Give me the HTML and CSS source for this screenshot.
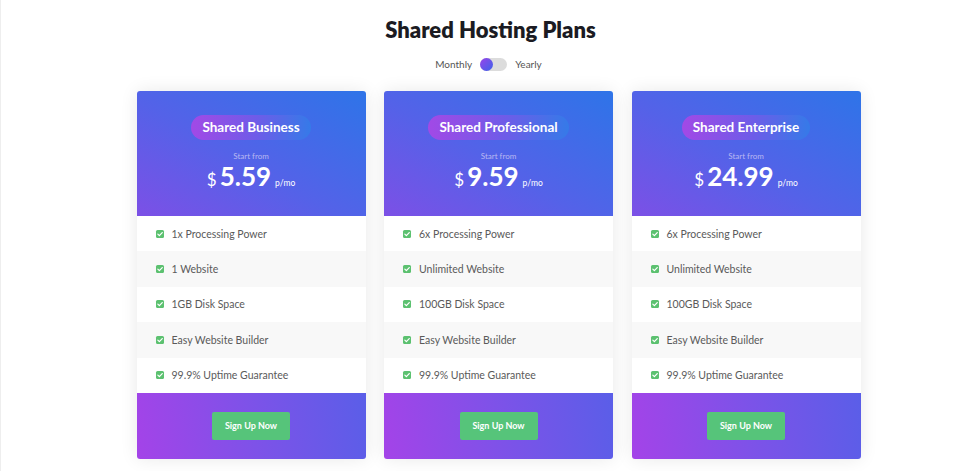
FILE: index.html
```html
<!DOCTYPE html>
<html>
<head>
<meta charset="utf-8">
<link rel="stylesheet" href="styles.css">
</head>
<body>
<div class="page">
  <h1 class="title">Shared Hosting Plans</h1>
  <div class="switch-row">
    <span class="switch-label">Monthly</span>
    <span class="switch"><span class="knob"></span></span>
    <span class="switch-label">Yearly</span>
  </div>
  <div class="cards">
    <div class="card">
      <div class="card-head">
        <span class="pill">Shared Business</span>
        <div class="start">Start from</div>
        <div class="price"><span class="cur">$</span><span class="amt">5.59</span><span class="per">p/mo</span></div>
      </div>
      <ul class="features">
        <li><span class="chk"><svg viewBox="0 0 10 10"><path d="M2.3 5.2 L4.2 7 L7.8 3.2" fill="none" stroke="#fff" stroke-width="1.5" stroke-linecap="round" stroke-linejoin="round"/></svg></span>1x Processing Power</li>
        <li class="alt"><span class="chk"><svg viewBox="0 0 10 10"><path d="M2.3 5.2 L4.2 7 L7.8 3.2" fill="none" stroke="#fff" stroke-width="1.5" stroke-linecap="round" stroke-linejoin="round"/></svg></span>1 Website</li>
        <li><span class="chk"><svg viewBox="0 0 10 10"><path d="M2.3 5.2 L4.2 7 L7.8 3.2" fill="none" stroke="#fff" stroke-width="1.5" stroke-linecap="round" stroke-linejoin="round"/></svg></span>1GB Disk Space</li>
        <li class="alt"><span class="chk"><svg viewBox="0 0 10 10"><path d="M2.3 5.2 L4.2 7 L7.8 3.2" fill="none" stroke="#fff" stroke-width="1.5" stroke-linecap="round" stroke-linejoin="round"/></svg></span>Easy Website Builder</li>
        <li><span class="chk"><svg viewBox="0 0 10 10"><path d="M2.3 5.2 L4.2 7 L7.8 3.2" fill="none" stroke="#fff" stroke-width="1.5" stroke-linecap="round" stroke-linejoin="round"/></svg></span>99.9% Uptime Guarantee</li>
      </ul>
      <div class="card-foot"><a class="btn">Sign Up Now</a></div>
    </div>
    <div class="card">
      <div class="card-head">
        <span class="pill">Shared Professional</span>
        <div class="start">Start from</div>
        <div class="price"><span class="cur">$</span><span class="amt">9.59</span><span class="per">p/mo</span></div>
      </div>
      <ul class="features">
        <li><span class="chk"><svg viewBox="0 0 10 10"><path d="M2.3 5.2 L4.2 7 L7.8 3.2" fill="none" stroke="#fff" stroke-width="1.5" stroke-linecap="round" stroke-linejoin="round"/></svg></span>6x Processing Power</li>
        <li class="alt"><span class="chk"><svg viewBox="0 0 10 10"><path d="M2.3 5.2 L4.2 7 L7.8 3.2" fill="none" stroke="#fff" stroke-width="1.5" stroke-linecap="round" stroke-linejoin="round"/></svg></span>Unlimited Website</li>
        <li><span class="chk"><svg viewBox="0 0 10 10"><path d="M2.3 5.2 L4.2 7 L7.8 3.2" fill="none" stroke="#fff" stroke-width="1.5" stroke-linecap="round" stroke-linejoin="round"/></svg></span>100GB Disk Space</li>
        <li class="alt"><span class="chk"><svg viewBox="0 0 10 10"><path d="M2.3 5.2 L4.2 7 L7.8 3.2" fill="none" stroke="#fff" stroke-width="1.5" stroke-linecap="round" stroke-linejoin="round"/></svg></span>Easy Website Builder</li>
        <li><span class="chk"><svg viewBox="0 0 10 10"><path d="M2.3 5.2 L4.2 7 L7.8 3.2" fill="none" stroke="#fff" stroke-width="1.5" stroke-linecap="round" stroke-linejoin="round"/></svg></span>99.9% Uptime Guarantee</li>
      </ul>
      <div class="card-foot"><a class="btn">Sign Up Now</a></div>
    </div>
    <div class="card">
      <div class="card-head">
        <span class="pill">Shared Enterprise</span>
        <div class="start">Start from</div>
        <div class="price"><span class="cur">$</span><span class="amt">24.99</span><span class="per">p/mo</span></div>
      </div>
      <ul class="features">
        <li><span class="chk"><svg viewBox="0 0 10 10"><path d="M2.3 5.2 L4.2 7 L7.8 3.2" fill="none" stroke="#fff" stroke-width="1.5" stroke-linecap="round" stroke-linejoin="round"/></svg></span>6x Processing Power</li>
        <li class="alt"><span class="chk"><svg viewBox="0 0 10 10"><path d="M2.3 5.2 L4.2 7 L7.8 3.2" fill="none" stroke="#fff" stroke-width="1.5" stroke-linecap="round" stroke-linejoin="round"/></svg></span>Unlimited Website</li>
        <li><span class="chk"><svg viewBox="0 0 10 10"><path d="M2.3 5.2 L4.2 7 L7.8 3.2" fill="none" stroke="#fff" stroke-width="1.5" stroke-linecap="round" stroke-linejoin="round"/></svg></span>100GB Disk Space</li>
        <li class="alt"><span class="chk"><svg viewBox="0 0 10 10"><path d="M2.3 5.2 L4.2 7 L7.8 3.2" fill="none" stroke="#fff" stroke-width="1.5" stroke-linecap="round" stroke-linejoin="round"/></svg></span>Easy Website Builder</li>
        <li><span class="chk"><svg viewBox="0 0 10 10"><path d="M2.3 5.2 L4.2 7 L7.8 3.2" fill="none" stroke="#fff" stroke-width="1.5" stroke-linecap="round" stroke-linejoin="round"/></svg></span>99.9% Uptime Guarantee</li>
      </ul>
      <div class="card-foot"><a class="btn">Sign Up Now</a></div>
    </div>
  </div>
</div>
</body>
</html>
```
FILE: styles.css
```css
* { box-sizing: border-box; }
html, body { margin: 0; padding: 0; background: #fff; }
body {
  font-family: "Lato", "Open Sans", sans-serif;
  color: #222;
  border-left: 1px solid #eee;
  height: 471px;
  overflow: hidden;
}
.page { padding-top: 16px; }
.title {
  margin: 0;
  text-align: center;
  font-size: 22px;
  line-height: 28px;
  font-weight: 800;
  color: #1b1b22;
  letter-spacing: 0;
}
.switch-row {
  margin-top: 13px;
  display: flex;
  justify-content: center;
  align-items: center;
  gap: 8px;
  height: 14px;
  padding-right: 4px;
}
.switch-label { font-size: 10px; color: #555; }
.switch {
  width: 27px;
  height: 13px;
  border-radius: 7px;
  background: #dcdcdc;
  display: flex;
  align-items: center;
}
.knob {
  width: 13px;
  height: 13px;
  border-radius: 50%;
  background: linear-gradient(135deg, #9a44ea, #3c63ea);
}
.cards {
  margin-top: 20px;
  margin-left: calc(50% - 354px);
  width: 724px;
  display: flex;
  gap: 18.5px;
}
.card {
  width: 229px;
  border-radius: 3px;
  overflow: hidden;
  box-shadow: 0 0 18px rgba(0, 0, 0, 0.09);
  background: #fff;
}
.card-head {
  height: 125px;
  padding-top: 24px;
  display: flex;
  flex-direction: column;
  align-items: center;
  background: linear-gradient(30deg, #7c50e6 0%, #5462e8 45%, #2e74e8 100%);
}
.pill {
  height: 25px;
  line-height: 25px;
  padding: 0 11px;
  border-radius: 13px;
  font-size: 13.5px;
  font-weight: 700;
  color: #fff;
  background: linear-gradient(90deg, #a249e6 0%, #6e5ce8 55%, #357ae8 100%);
}
.start {
  margin-top: 11px;
  font-size: 8px;
  line-height: 10px;
  color: #b9b8f2;
}
.price {
  margin-top: 0;
  display: flex;
  align-items: baseline;
  color: #fff;
}
.cur { font-size: 17px; margin-right: 3px; }
.amt { font-size: 26px; font-weight: 700; line-height: 30px; }
.per { font-size: 8.5px; margin-left: 4px; }
.features { list-style: none; margin: 0; padding: 0; }
.features li {
  height: 35.4px;
  display: flex;
  align-items: center;
  padding-left: 19px;
  font-size: 10.5px;
  color: #5a5a5a;
}
.features li.alt { background: #f8f8f8; }
.chk {
  width: 8px;
  height: 8px;
  border-radius: 1.5px;
  background: #5cc170;
  margin-right: 8px;
  display: flex;
}
.chk svg { width: 8px; height: 8px; }
.card-foot {
  height: 66px;
  padding-top: 19px;
  display: flex;
  justify-content: center;
  align-items: flex-start;
  background: linear-gradient(80deg, #a443e8 0%, #7e52e8 50%, #5a5ee8 100%);
}
.btn {
  width: 78px;
  height: 28px;
  line-height: 28px;
  text-align: center;
  border-radius: 2px;
  background: #56c47a;
  color: #fff;
  font-size: 9px;
  font-weight: 700;
}
```
